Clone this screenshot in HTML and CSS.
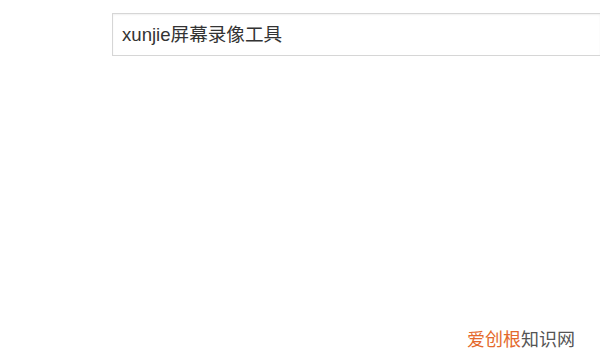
FILE: index.html
```html
<!DOCTYPE html>
<html lang="en">
<head>
    <meta charset="UTF-8">
    <title>Search</title>
    <link rel="stylesheet" href="styles.css">
</head>
<body>
<div id="page">
    <div class="search-box">xunjie屏幕录像工具</div>
</div>
<!--watermark-->
<div class="mark"><span class="hot">爱创根</span>知识网</div>
</body>
</html>
```
FILE: styles.css
```css
*{
    margin:0;
    padding:0;
}
html,body{
    width: 600px;
    height: 360px;
    overflow: hidden;
    background: #fff;
}
body{
    position: relative;
    font-family: "Liberation Sans", "Noto Sans CJK SC", sans-serif;
}
#page{
    padding: 13px 0 0 112px;
}
.search-box{
    width: 478px;
    height: 41px;
    border: 1px solid #d6d6d6;
    border-right: none;
    box-shadow: inset 0 1px 2px rgba(0,0,0,0.06);
    padding-left: 9px;
    font-size: 18.6px;
    line-height: 41px;
    color: #333;
}
.mark{
    position: absolute;
    left: 467px;
    top: 330px;
    font-size: 18px;
    line-height: 20px;
    color: #555;
}
.mark .hot{
    color: #e4692c;
}
```
